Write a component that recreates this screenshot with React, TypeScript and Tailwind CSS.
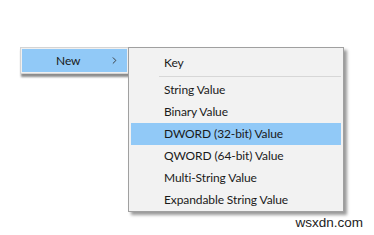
import { ChevronRight } from "lucide-react";

const items = [
    "String Value",
    "Binary Value",
    "DWORD (32-bit) Value",
    "QWORD (64-bit) Value",
    "Multi-String Value",
    "Expandable String Value",
];

export default function App() {
    return (
        <div className="w-[374px] h-[235px] bg-white flex flex-col overflow-hidden" style={{ fontFamily: 'Lato, "Noto Sans", sans-serif' }}>
            <div className="flex items-start pt-[47px] pl-[20px]">
                {/* parent menu */}
                <div className="w-[109px] bg-[#f0f0f0] border border-[#d4d4d4] p-[1px] shadow-[1px_3px_2px_rgba(0,0,0,0.45)]">
                    <div className="h-[23px] bg-[#91c9f7] flex items-center text-[12px] tracking-[-0.1px] text-[#1a1a1a]">
                        <span className="ml-[34px]">New</span>
                        <ChevronRight className="ml-auto mr-[7px] w-[11px] h-[11px] text-[#333]" strokeWidth={2} />
                    </div>
                </div>

                {/* submenu */}
                <div className="-ml-[1px] w-[216px] bg-[#f2f2f2] border border-[#a0a0a0] px-[2px] pt-[3px] pb-0 shadow-[3px_3px_3px_rgba(0,0,0,0.4)] text-[12px] tracking-[-0.1px] text-[#1a1a1a]">
                    <div className="h-[22px] flex items-center pl-[33px] pt-[2px]">Key</div>
                    <div className="h-[6px] flex items-center pl-[28px]">
                        <div className="h-px w-full bg-[#d7d7d7]" />
                    </div>
                    {items.map((label) => (
                        <div
                            key={label}
                            className={`h-[22px] flex items-center pl-[33px] ${label.startsWith("DWORD") ? "bg-[#91c9f7]" : ""}`}
                        >
                            {label}
                        </div>
                    ))}
                </div>
            </div>

            <div className="flex justify-end pr-[11px] mt-[2px]">
                <span className="text-[13.5px] leading-[18px] text-[#222]" style={{ fontFamily: '"Liberation Sans", Arial, sans-serif' }}>wsxdn.com</span>
            </div>
        </div>
    );
}
